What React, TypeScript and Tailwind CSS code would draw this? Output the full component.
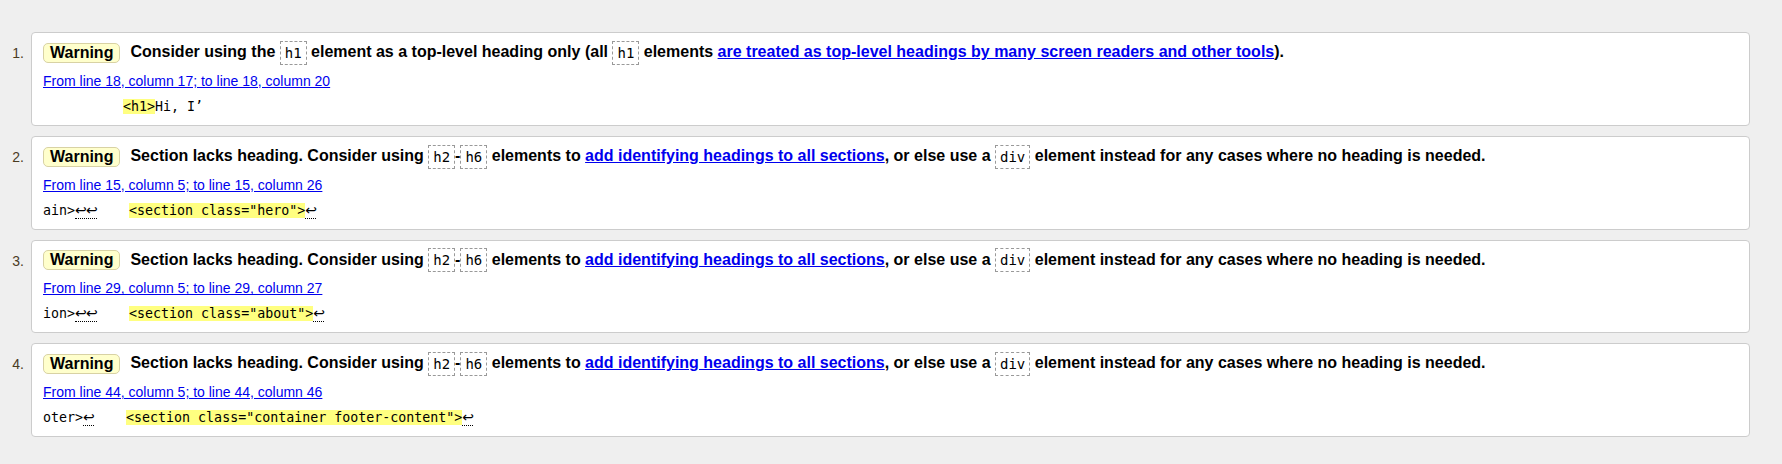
import React from 'react';

const mono = { fontFamily: '"DejaVu Sans Mono", "Liberation Mono", monospace' };
const arrowFont = { fontFamily: '"DejaVu Sans", sans-serif' };

function Code({ children }: { children: React.ReactNode }) {
  return (
    <code
      className="inline-block h-[24px] px-[4px] border border-dashed border-[#999] text-[14px] leading-[22px] font-normal align-middle text-black"
      style={mono}
    >
      {children}
    </code>
  );
}

// line-break marker in the extract
function Lf({ count = 1 }: { count?: number }) {
  return (
    <span className="border-b border-dotted border-black">
      {Array.from({ length: count }).map((_, i) => (
        <span key={i} className="inline-block w-[11px] text-[14px] leading-[16px] text-center" style={arrowFont}>
          ↩
        </span>
      ))}
    </span>
  );
}

function Hl({ children }: { children: React.ReactNode }) {
  return <span className="bg-[#ffff80]">{children}</span>;
}

function SectionMessage() {
  return (
    <>
      Section lacks heading. Consider using <Code>h2</Code>-<Code>h6</Code> elements to{' '}
      <a href="#" className="text-[#0000ee] underline">add identifying headings to all sections</a>, or else use a{' '}
      <Code>div</Code> element instead for any cases where no heading is needed.
    </>
  );
}

type Item = {
  message: React.ReactNode;
  location: string;
  extract: React.ReactNode;
};

const items: Item[] = [
  {
    message: (
      <>
        Consider using the <Code>h1</Code> element as a top-level heading only (all <Code>h1</Code> elements{' '}
        <a href="#" className="text-[#0000ee] underline">are treated as top-level headings by many screen readers and other tools</a>).
      </>
    ),
    location: 'From line 18, column 17; to line 18, column 20',
    extract: (
      <>
        {'          '}
        <Hl>{'<h1>'}</Hl>
        {'Hi, I’'}
      </>
    ),
  },
  {
    message: <SectionMessage />,
    location: 'From line 15, column 5; to line 15, column 26',
    extract: (
      <>
        {'ain>'}
        <Lf count={2} />
        {'    '}
        <Hl>{'<section class="hero">'}</Hl>
        <Lf />
      </>
    ),
  },
  {
    message: <SectionMessage />,
    location: 'From line 29, column 5; to line 29, column 27',
    extract: (
      <>
        {'ion>'}
        <Lf count={2} />
        {'    '}
        <Hl>{'<section class="about">'}</Hl>
        <Lf />
      </>
    ),
  },
  {
    message: <SectionMessage />,
    location: 'From line 44, column 5; to line 44, column 46',
    extract: (
      <>
        {'oter>'}
        <Lf />
        {'    '}
        <Hl>{'<section class="container footer-content">'}</Hl>
        <Lf />
      </>
    ),
  },
];

export default function App() {
  return (
    <div
      className="min-h-[464px] bg-[#efefef] pt-[32px] pb-[28px]"
      style={{ fontFamily: '"Liberation Sans", Arial, sans-serif' }}
    >
      <ol className="flex flex-col gap-[10px]">
        {items.map((item, i) => (
          <li key={i} className="flex">
            <div className="w-[31px] pr-[7px] pt-[12px] text-right text-[14px] leading-[18px] text-[#4a3b1f]">
              {i + 1}.
            </div>
            <div className="flex-1 mr-[32px] bg-white border border-[#ccc] rounded-[4px] pt-[7px] pb-[8px] pl-[11px] pr-[11px]">
              <p className="text-[16px] leading-[24px] font-bold text-black whitespace-nowrap">
                <span className="inline-block h-[20px] px-[6px] mr-[10px] bg-[#ffffcc] border border-[#d8d2a4] rounded-[5px] leading-[18px] align-middle">
                  Warning
                </span>
                {item.message}
              </p>
              <p className="mt-[6px] text-[14px] leading-[20px]">
                <a href="#" className="text-[#0000ee] underline">{item.location}</a>
              </p>
              <p className="mt-[6px] text-[13.3px] leading-[20px] text-black whitespace-pre" style={mono}>
                {item.extract}
              </p>
            </div>
          </li>
        ))}
      </ol>
    </div>
  );
}
